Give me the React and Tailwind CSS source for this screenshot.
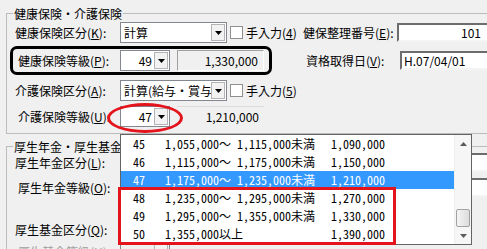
import React from 'react';

const uiFont = { fontFamily: '"Noto Sans CJK JP", "Liberation Sans", sans-serif' };

const grades = [
  { no: '45', range: '1,055,000～ 1,115,000未満', amount: '1,090,000' },
  { no: '46', range: '1,115,000～ 1,175,000未満', amount: '1,150,000' },
  { no: '47', range: '1,175,000～ 1,235,000未満', amount: '1,210,000' },
  { no: '48', range: '1,235,000～ 1,295,000未満', amount: '1,270,000' },
  { no: '49', range: '1,295,000～ 1,355,000未満', amount: '1,330,000' },
  { no: '50', range: '1,355,000以上', amount: '1,390,000' },
];

const Label = ({ text, k, indent, width = 'w-[113px]', disabled }) => (
  <div className={`${width} ${indent ? 'pl-[11px]' : 'pl-[8px]'} ${disabled ? 'text-[#a0a0a0]' : 'text-black'} whitespace-nowrap leading-[16px]`}>
    {text}(<u className="underline-offset-1">{k}</u>):
  </div>
);

const Arrow = ({ disabled }) => (
  <div className="mr-[1px] flex h-[17px] w-[14px] shrink-0 items-center justify-center border border-[#b4b4b4] bg-[#f2f2f2]">
    <svg width="7" height="4" viewBox="0 0 7 4">
      <polygon points="0,0 7,0 3.5,4" fill={disabled ? '#a0a0a0' : '#000'} />
    </svg>
  </div>
);

const Combo = ({ width, value, small, disabled }) => (
  <div className={`flex h-[21px] ${width} items-center border border-[#828790] ${disabled ? 'bg-[#f0f0f0]' : 'bg-white'}`}>
    <span className={`flex-1 overflow-hidden whitespace-nowrap leading-[17px] ${small ? 'pr-[2px] text-right' : 'pl-[3px]'}`}>{value}</span>
    <Arrow disabled={disabled} />
  </div>
);

const ReadOnly = ({ value, faint }) => (
  <div className={`ml-[7px] flex h-[21px] w-[87px] items-center justify-end pr-[5px] leading-[16px] ${faint ? 'border-t border-[#dcdcdc]' : 'border border-t-[#a0a0a0] border-l-[#a0a0a0] border-b-white border-r-white'}`}>
    {value}
  </div>
);

const Check = ({ k }) => (
  <div className="flex w-[76px] items-center pl-[3px]">
    <div className="h-[13px] w-[13px] border border-[#8f8f8f] bg-white" />
    <span className="ml-[3px] whitespace-nowrap leading-[16px]">
      手入力(<u>{k}</u>)
    </span>
  </div>
);

const TextBox = ({ value, right, className = '' }) => (
  <div className={`flex h-[19px] w-[100px] items-center border-2 border-t-[#6d6d6d] border-l-[#6d6d6d] border-b-[#f4f4f4] border-r-[#f4f4f4] bg-white leading-[15px] ${right ? 'justify-end pr-[14px]' : 'pl-[2px]'} ${className}`}>
    {value}
  </div>
);

const GroupTitle = ({ text }) => (
  <div className="absolute left-[6px] top-[-9px] bg-[#f0f0f0] px-[1px] leading-[17px]">{text}</div>
);

const DropList = () => (
  <div className="absolute left-[120px] top-[134px] flex h-[111px] w-[352px] border border-[#646464] bg-white">
    <div className="flex-1" style={{ fontFamily: '"Noto Sans Mono CJK JP", "Noto Sans CJK JP", monospace' }}>
      {grades.map((g) => (
        <div
          key={g.no}
          className={`flex h-[18px] items-center text-[12px] leading-[16px] ${g.no === '47' ? 'bg-[#3399ff] text-white' : 'text-black'}`}
        >
          <span className="w-[44px] pl-[12px]">{g.no}</span>
          <span className="w-[166px] whitespace-nowrap">{g.range}</span>
          <span>{g.amount}</span>
        </div>
      ))}
    </div>
    <div className="flex w-[17px] flex-col border-l border-[#f0f0f0] bg-[#f6f6f6]">
      <div className="flex h-[17px] items-center justify-center">
        <svg width="7" height="4" viewBox="0 0 7 4">
          <polygon points="3.5,0 7,4 0,4" fill="#5a5a5a" />
        </svg>
      </div>
      <div className="flex-1" />
      <div className="mx-[1px] h-[18px] rounded-[2px] border border-[#a2a2a2] bg-gradient-to-r from-[#f4f4f4] to-[#dcdcdc]" />
      <div className="flex h-[17px] items-center justify-center">
        <svg width="7" height="4" viewBox="0 0 7 4">
          <polygon points="0,0 7,0 3.5,4" fill="#5a5a5a" />
        </svg>
      </div>
    </div>
  </div>
);

export default function App() {
  return (
    <div className="relative h-[249px] w-[487px] overflow-hidden bg-[#f0f0f0] text-[12px] leading-none text-black" style={uiFont}>
      {/* 健康保険・介護保険 */}
      <div className="relative ml-[6px] mt-[13px] flex h-[121px] w-[520px] flex-col border border-[#bcbcbc] pb-[4px] pt-[8px]">
        <GroupTitle text="健康保険・介護保険" />
        <div className="flex h-[21px] items-center">
          <Label text="健康保険区分" k="K" />
          <Combo width="w-[107px]" value="計算" />
          <Check k="4" />
          <div className="w-[94px] whitespace-nowrap leading-[16px]">
            健保整理番号(<u>E</u>):
          </div>
          <TextBox value="101" right />
        </div>
        <div className="mt-[7px] flex h-[21px] items-center">
          <Label text="健康保険等級" k="P" indent />
          <Combo width="w-[50px]" value="49" small />
          <ReadOnly value="1,330,000" />
          <div className="ml-[42px] w-[94px] whitespace-nowrap leading-[16px]">
            資格取得日(<u>V</u>):
          </div>
          <TextBox value="H.07/04/01" />
        </div>
        <div className="mt-[9px] flex h-[21px] items-center">
          <Label text="介護保険区分" k="A" />
          <Combo width="w-[107px]" value="計算(給与・賞与)" />
          <Check k="5" />
        </div>
        <div className="mt-[5px] flex h-[21px] items-center">
          <Label text="介護保険等級" k="U" indent />
          <Combo width="w-[50px]" value="47" small />
          <ReadOnly value="1,210,000" faint />
        </div>
      </div>

      {/* 厚生年金・厚生基金 */}
      <div className="relative ml-[6px] mt-[12px] flex h-[130px] w-[520px] flex-col border-l border-t border-[#bcbcbc] pt-[5px]">
        <GroupTitle text="厚生年金・厚生基金" />
        <div className="flex h-[21px] items-center">
          <Label text="厚生年金区分" k="L" width="w-[449px]" />
          <TextBox value="01" className="pl-[19px]" />
        </div>
        <div className="mt-[4px] flex h-[21px] items-center">
          <Label text="厚生年金等級" k="O" indent width="w-[449px]" />
          <TextBox value="" />
        </div>
        <div className="mt-[21px] flex h-[21px] items-center">
          <Label text="厚生基金区分" k="Q" />
        </div>
        <div className="mt-[1px] flex h-[21px] items-center">
          <Label text="厚生基金等級" k="H" indent disabled />
          <Combo width="w-[50px]" value="" small disabled />
        </div>
      </div>

      <DropList />

      {/* annotations */}
      <div className="absolute left-[10px] top-[46px] h-[29px] w-[262px] rounded-[7px] border-[3px] border-black" />
      <div className="absolute left-[107px] top-[103px] h-[30px] w-[76px] rounded-[50%] border-[3px] border-[#e3141c]" />
      <div className="absolute left-[118px] top-[187px] h-[58px] w-[278px] border-[3px] border-[#e3141c]" />
    </div>
  );
}
